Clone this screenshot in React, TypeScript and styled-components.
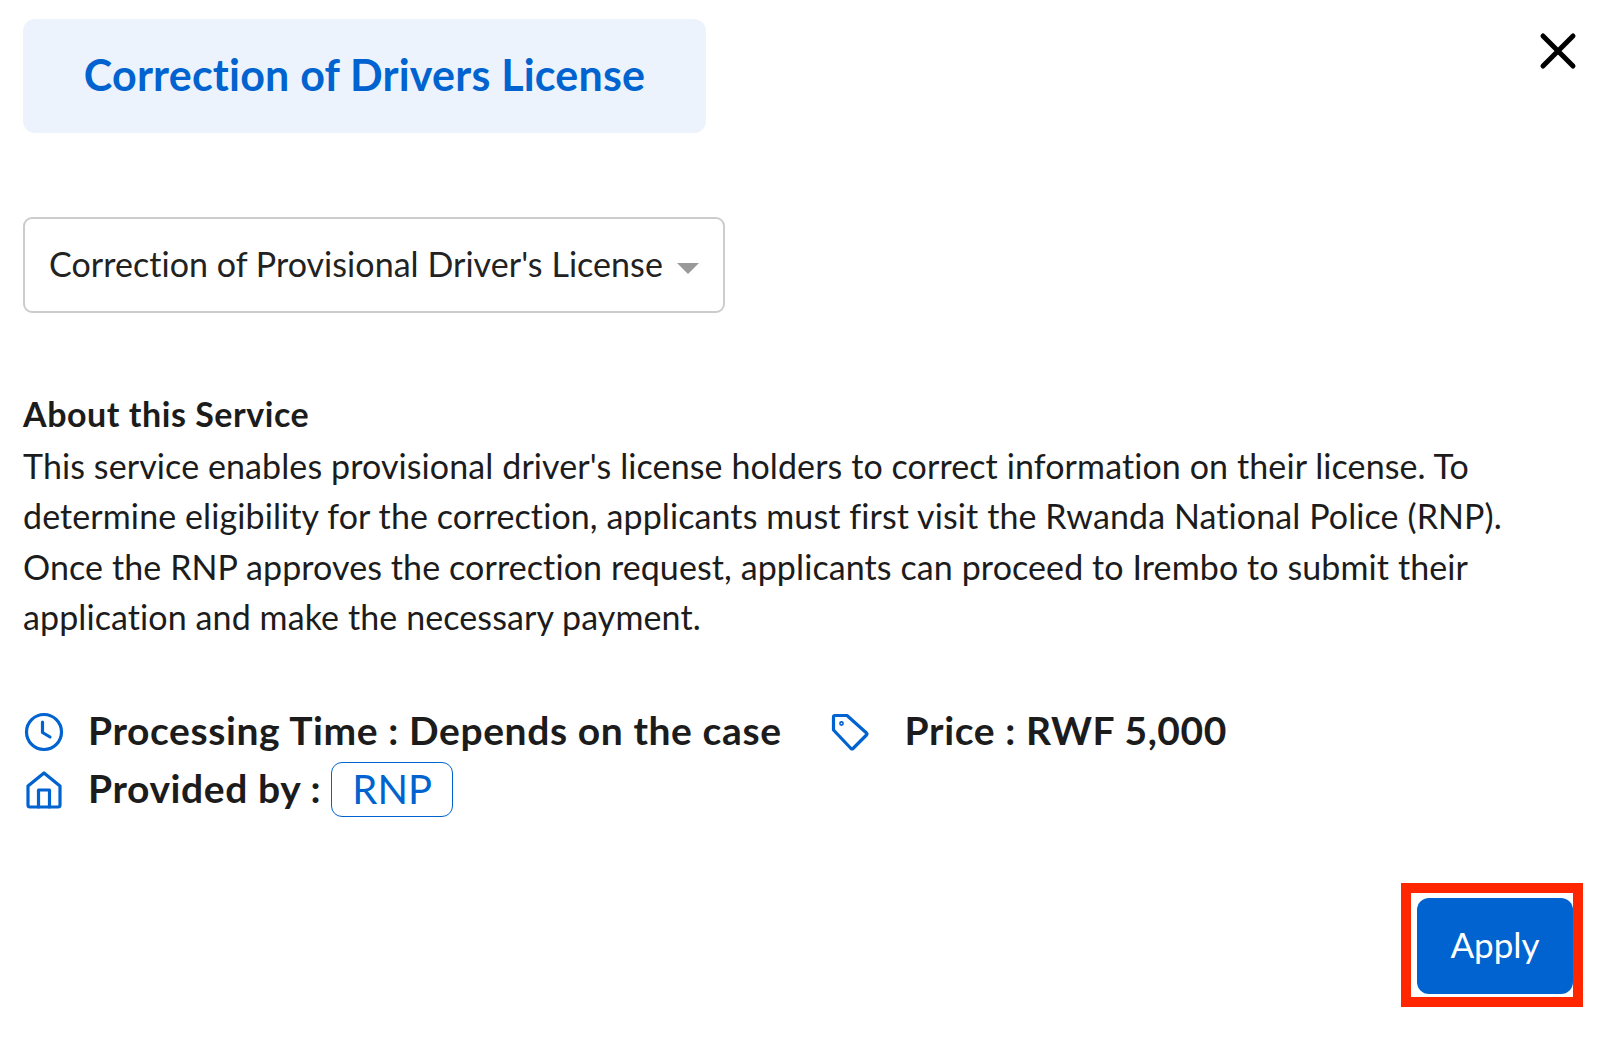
import React from "react";
import styled, { createGlobalStyle } from "styled-components";

const Global = createGlobalStyle`
  html, body { margin: 0; padding: 0; background: #fff; }
  body {
    font-family: "Lato", "Open Sans", sans-serif;
    font-variant-ligatures: none;
    color: #1c1c1c;
  }
`;

const Page = styled.div`
  width: 1600px;
  height: 1050px;
  box-sizing: border-box;
  padding: 19px 17px 0 23px;
  display: flex;
  flex-direction: column;
`;

const Header = styled.header`
  display: flex;
  justify-content: space-between;
  align-items: flex-start;
`;

const TitleBox = styled.div`
  width: 683px;
  height: 114px;
  box-sizing: border-box;
  padding-bottom: 4px;
  background: #ecf3fd;
  border-radius: 12px;
  display: flex;
  align-items: center;
  justify-content: center;
`;

const Title = styled.h1`
  margin: 0;
  font-size: 43px;
  font-weight: 700;
  color: #0063cf;
  letter-spacing: 0.2px;
`;

const CloseButton = styled.button`
  border: 0;
  background: none;
  padding: 0;
  margin: 10px 3px 0 0;
  width: 44px;
  height: 44px;
  display: flex;
  align-items: center;
  justify-content: center;
`;

const Select = styled.div`
  margin-top: 84px;
  width: 702px;
  height: 96px;
  box-sizing: border-box;
  border: 2px solid #cccccc;
  border-radius: 9px;
  padding: 0 24px 4px;
  display: flex;
  align-items: center;
  gap: 14px;
  font-size: 34px;
  letter-spacing: 0.05px;
  color: #222;
  white-space: nowrap;
`;

const Caret = styled.span`
  width: 0;
  height: 0;
  border-left: 11px solid transparent;
  border-right: 11px solid transparent;
  border-top: 11px solid #999;
  margin-top: 10px;
`;

const About = styled.section`
  margin-top: 76px;
  font-size: 34px;
  line-height: 50.6px;
  letter-spacing: 0.1px;
  width: 1540px;
`;

const AboutHeading = styled.div`
  font-weight: 700;
  letter-spacing: 0.55px;
  margin-bottom: 1px;
`;

const MetaList = styled.div`
  margin-top: 61px;
  display: flex;
  flex-direction: column;
  gap: 2px;
`;

const MetaRow = styled.div`
  display: flex;
  align-items: center;
  height: 56px;
`;

const IconSlot = styled.span<{ $gap: number }>`
  width: 42px;
  margin-right: ${(p) => p.$gap}px;
  display: flex;
  justify-content: center;
  flex: none;
`;

const MetaText = styled.span`
  font-size: 39px;
  font-weight: 700;
  letter-spacing: 0.6px;
  white-space: nowrap;
  padding-bottom: 3px;
`;

const PriceItem = styled.span`
  display: flex;
  align-items: center;
  margin-left: 47px;
`;

const Badge = styled.span`
  margin-left: 10px;
  width: 122px;
  height: 55px;
  box-sizing: border-box;
  border: 1.5px solid #0063cf;
  border-radius: 11px;
  padding-bottom: 2px;
  color: #0063cf;
  font-size: 40px;
  display: flex;
  align-items: center;
  justify-content: center;
`;

const Footer = styled.footer`
  margin-top: 65px;
  display: flex;
  justify-content: flex-end;
`;

const Highlight = styled.div`
  border: 10px solid #ff2600;
  padding: 5px 0 3px 6px;
  width: 182px;
  height: 124px;
  box-sizing: border-box;
`;

const ApplyButton = styled.button`
  width: 156px;
  height: 96px;
  border: 0;
  border-radius: 12px;
  background: #0063cf;
  color: #fff;
  font-family: "Lato", sans-serif;
  font-variant-ligatures: none;
  font-size: 35px;
  padding: 0 0 4px;
`;

const Icon = styled.svg`
  display: block;
  fill: none;
  stroke: #0063cf;
  stroke-width: 3.2;
  stroke-linecap: round;
  stroke-linejoin: round;
`;

export default function App() {
  return (
    <Page>
      <Global />
      <Header>
        <TitleBox>
          <Title>Correction of Drivers License</Title>
        </TitleBox>
        <CloseButton aria-label="Close">
          <svg width="44" height="44" viewBox="0 0 44 44" fill="none" stroke="#000" strokeWidth="5" strokeLinecap="round">
            <path d="M7 7 L37 37 M37 7 L7 37" />
          </svg>
        </CloseButton>
      </Header>

      <Select>
        Correction of Provisional Driver's License
        <Caret />
      </Select>

      <About>
        <AboutHeading>About this Service</AboutHeading>
        This service enables provisional driver's license holders to correct information on their license. To determine eligibility for the correction, applicants must first visit the Rwanda National Police (RNP). Once the RNP approves the correction request, applicants can proceed to Irembo to submit their application and make the necessary payment.
      </About>

      <MetaList>
        <MetaRow>
          <IconSlot $gap={23}>
            <Icon width="40" height="40" viewBox="0 0 40 40">
              <circle cx="20" cy="20" r="17.5" />
              <path d="M18.5 10 V20.5 L26 25" />
            </Icon>
          </IconSlot>
          <MetaText>Processing Time : Depends on the case</MetaText>
          <PriceItem>
            <IconSlot $gap={34}>
              <Icon width="38" height="38" viewBox="0 0 38 38">
                <path d="M2.5 4 a1.5 1.5 0 0 1 1.5 -1.5 H16 L35.5 20 a1.5 1.5 0 0 1 0 2 L22 35.5 a1.5 1.5 0 0 1 -2 0 L2.5 17 Z" />
                <circle cx="10.5" cy="10.5" r="0.8" />
              </Icon>
            </IconSlot>
            <MetaText>Price : RWF 5,000</MetaText>
          </PriceItem>
        </MetaRow>
        <MetaRow>
          <IconSlot $gap={23}>
            <Icon width="36" height="38" viewBox="0 0 36 38">
              <path d="M2 15 L18 2 L34 15 V34 a2 2 0 0 1 -2 2 H4 a2 2 0 0 1 -2 -2 Z" />
              <path d="M12.5 36 V19 H23.5 V36" />
            </Icon>
          </IconSlot>
          <MetaText>Provided by :</MetaText>
          <Badge>RNP</Badge>
        </MetaRow>
      </MetaList>

      <Footer>
        <Highlight>
          <ApplyButton>Apply</ApplyButton>
        </Highlight>
      </Footer>
    </Page>
  );
}
